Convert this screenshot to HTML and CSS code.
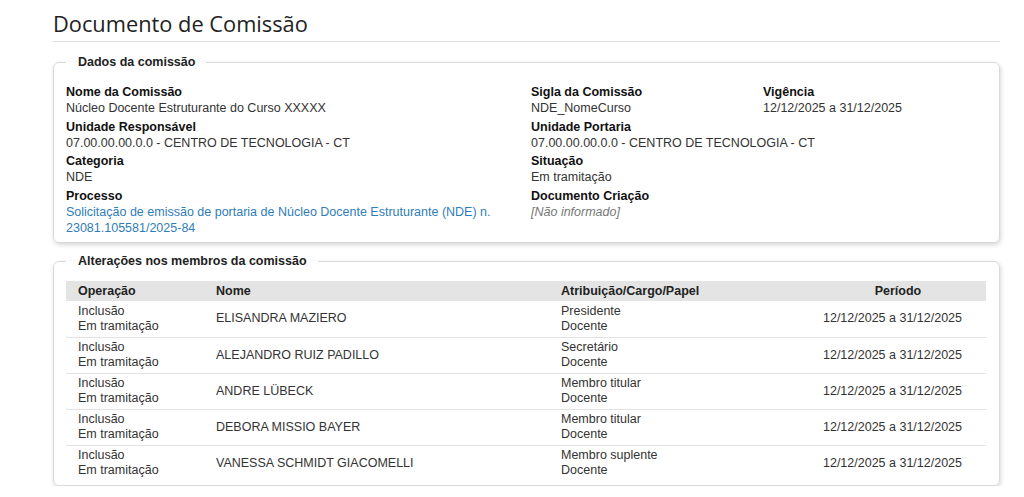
FILE: index.html
```html
<!DOCTYPE html>
<html lang="pt-BR">
<head>
<meta charset="utf-8">
<title>Documento de Comissão</title>
<link rel="stylesheet" href="styles.css">
</head>
<body>
<main class="page">
  <h1 class="page-title">Documento de Comissão</h1>

  <fieldset class="box">
    <legend class="box-legend">Dados da comissão</legend>
    <div class="info-grid">
      <div class="field">
        <div class="label">Nome da Comissão</div>
        <div class="value">Núcleo Docente Estruturante do Curso XXXXX</div>
      </div>
      <div class="field">
        <div class="label">Sigla da Comissão</div>
        <div class="value">NDE_NomeCurso</div>
      </div>
      <div class="field">
        <div class="label">Vigência</div>
        <div class="value">12/12/2025 a 31/12/2025</div>
      </div>

      <div class="field">
        <div class="label">Unidade Responsável</div>
        <div class="value">07.00.00.00.0.0 - CENTRO DE TECNOLOGIA - CT</div>
      </div>
      <div class="field span2">
        <div class="label">Unidade Portaria</div>
        <div class="value">07.00.00.00.0.0 - CENTRO DE TECNOLOGIA - CT</div>
      </div>

      <div class="field">
        <div class="label">Categoria</div>
        <div class="value">NDE</div>
      </div>
      <div class="field span2">
        <div class="label">Situação</div>
        <div class="value">Em tramitação</div>
      </div>

      <div class="field">
        <div class="label">Processo</div>
        <div class="value"><a class="link" href="#">Solicitação de emissão de portaria de Núcleo Docente Estruturante (NDE) n. 23081.105581/2025-84</a></div>
      </div>
      <div class="field span2">
        <div class="label">Documento Criação</div>
        <div class="value muted">[Não informado]</div>
      </div>
    </div>
  </fieldset>

  <fieldset class="box box-table">
    <legend class="box-legend">Alterações nos membros da comissão</legend>
    <table class="members">
      <colgroup>
        <col class="c-op"><col class="c-name"><col class="c-role"><col class="c-period">
      </colgroup>
      <thead>
        <tr><th>Operação</th><th>Nome</th><th>Atribuição/Cargo/Papel</th><th class="center">Período</th></tr>
      </thead>
      <tbody>
        <tr><td>Inclusão<br>Em tramitação</td><td>ELISANDRA MAZIERO</td><td>Presidente<br>Docente</td><td class="center period">12/12/2025 a 31/12/2025</td></tr>
        <tr><td>Inclusão<br>Em tramitação</td><td>ALEJANDRO RUIZ PADILLO</td><td>Secretário<br>Docente</td><td class="center period">12/12/2025 a 31/12/2025</td></tr>
        <tr><td>Inclusão<br>Em tramitação</td><td>ANDRE LÜBECK</td><td>Membro titular<br>Docente</td><td class="center period">12/12/2025 a 31/12/2025</td></tr>
        <tr><td>Inclusão<br>Em tramitação</td><td>DEBORA MISSIO BAYER</td><td>Membro titular<br>Docente</td><td class="center period">12/12/2025 a 31/12/2025</td></tr>
        <tr><td>Inclusão<br>Em tramitação</td><td>VANESSA SCHMIDT GIACOMELLI</td><td>Membro suplente<br>Docente</td><td class="center period">12/12/2025 a 31/12/2025</td></tr>
      </tbody>
    </table>
  </fieldset>
</main>
</body>
</html>
```

FILE: styles.css
```css
* { box-sizing: border-box; }

html, body {
  margin: 0;
  padding: 0;
  background: #fff;
}

body {
  font-family: "Liberation Sans", Arial, sans-serif;
  font-size: 12.5px;
  color: #333;
}

.page {
  width: 947px;
  margin-left: 53px;
}

.page-title {
  margin: 0;
  padding-top: 9px;
  padding-bottom: 2px;
  font-family: "Open Sans", "DejaVu Sans", sans-serif;
  font-weight: 400;
  font-size: 21.8px;
  line-height: 30px;
  color: #222;
  border-bottom: 1px solid #dcdcdc;
}

.box {
  margin: 13px 0 0 0;
  padding: 15px 12px 6px 12px;
  border: 1px solid #d9d9d9;
  border-radius: 6px;
  box-shadow: 1px 2px 4px rgba(0, 0, 0, 0.16);
  min-width: 0;
}

.box-legend {
  margin-left: 0;
  padding: 0 11px 0 12px;
  font-weight: bold;
  font-size: 12.5px;
  line-height: 15px;
  color: #222;
}

.info-grid {
  display: grid;
  grid-template-columns: 465px 232px 1fr;
  row-gap: 3.7px;
}

.span2 { grid-column: span 2; }

.field .label {
  font-weight: bold;
  color: #111;
  line-height: 15px;
}

.field .value {
  line-height: 16px;
  padding-right: 20px;
}

.link {
  color: #2f7db8;
  text-decoration: none;
}

.muted {
  color: #777;
  font-style: italic;
}

.box-table {
  margin-top: 11px;
  padding: 12px 12px 4px 12px;
}

.members {
  width: 920px;
  border-collapse: collapse;
  table-layout: fixed;
}

.c-op { width: 138px; }
.c-name { width: 345px; }
.c-role { width: 261px; }
.c-period { width: 176px; }

.members th {
  background: #e4e4e4;
  font-weight: bold;
  color: #222;
  text-align: left;
  height: 20px;
  padding: 0 12px;
  line-height: 15px;
}

.members td {
  padding: 2px 12px;
  height: 36px;
  line-height: 15px;
  vertical-align: middle;
  border-bottom: 1px solid #e2e2e2;
}

.members tbody tr:last-child td {
  border-bottom: none;
}

.members .center {
  text-align: center;
}

.members td.period {
  padding-right: 23px;
}
```
